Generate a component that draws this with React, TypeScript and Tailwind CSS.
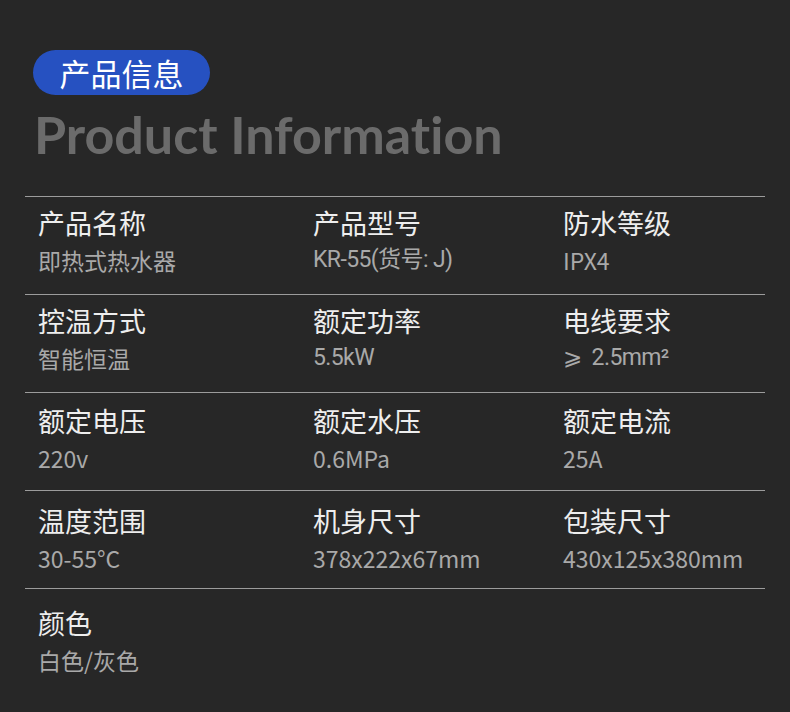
import React from "react";

const rows: { label: string; value: string; narrow?: boolean }[][] = [
  [
    { label: "产品名称", value: "即热式热水器" },
    { label: "产品型号", value: "KR-55(货号: J)", narrow: true },
    { label: "防水等级", value: "IPX4" },
  ],
  [
    { label: "控温方式", value: "智能恒温" },
    { label: "额定功率", value: "5.5kW", narrow: true },
    { label: "电线要求", value: "⩾  2.5mm²", narrow: true },
  ],
  [
    { label: "额定电压", value: "220v" },
    { label: "额定水压", value: "0.6MPa" },
    { label: "额定电流", value: "25A" },
  ],
  [
    { label: "温度范围", value: "30-55°C" },
    { label: "机身尺寸", value: "378x222x67mm" },
    { label: "包装尺寸", value: "430x125x380mm" },
  ],
  [{ label: "颜色", value: "白色/灰色" }],
];

const pads = ["pt-[9px]", "pt-[9px]", "pt-[11px]", "pt-[13px]", "pt-[17px]"];

const cjk = "'Noto Sans CJK SC', 'Noto Sans', sans-serif";
const narrowFont = "Roboto, 'Noto Sans CJK SC', sans-serif";

export default function App() {
  return (
    <div
      className="w-[790px] h-[712px] bg-[#272727] overflow-hidden"
      style={{ fontFamily: cjk }}
    >
      <div className="pt-[50px] pl-[33px]">
        <div className="w-[177px] h-[45px] rounded-full bg-[#2651c1] flex items-center justify-center text-white text-[31px] leading-none">
          产品信息
        </div>
        <div
          className="mt-[7px] ml-[1px] text-[#6b6b6b] text-[52px] font-bold leading-[64px] [font-variant-ligatures:none]"
          style={{ fontFamily: "Lato, 'Open Sans', sans-serif" }}
        >
          Product Information
        </div>
      </div>
      <div className="mt-[30px] mx-[25px]">
        {rows.map((row, i) => (
          <div
            key={i}
            className={`border-t border-[#9c9c9c] h-[98px] grid grid-cols-[275px_250px_1fr] pl-[13px] ${pads[i]}`}
          >
            {row.map((c, j) => (
              <div key={j} className="flex flex-col">
                <div className="text-[27px] leading-[34px] text-[#eeeeee]">{c.label}</div>
                <div
                  className="mt-[5px] text-[23px] leading-[30px] text-[#a9a9a9] whitespace-pre"
                  style={c.narrow ? { fontFamily: narrowFont, letterSpacing: "-0.6px" } : undefined}
                >
                  {c.value}
                </div>
              </div>
            ))}
          </div>
        ))}
      </div>
    </div>
  );
}
